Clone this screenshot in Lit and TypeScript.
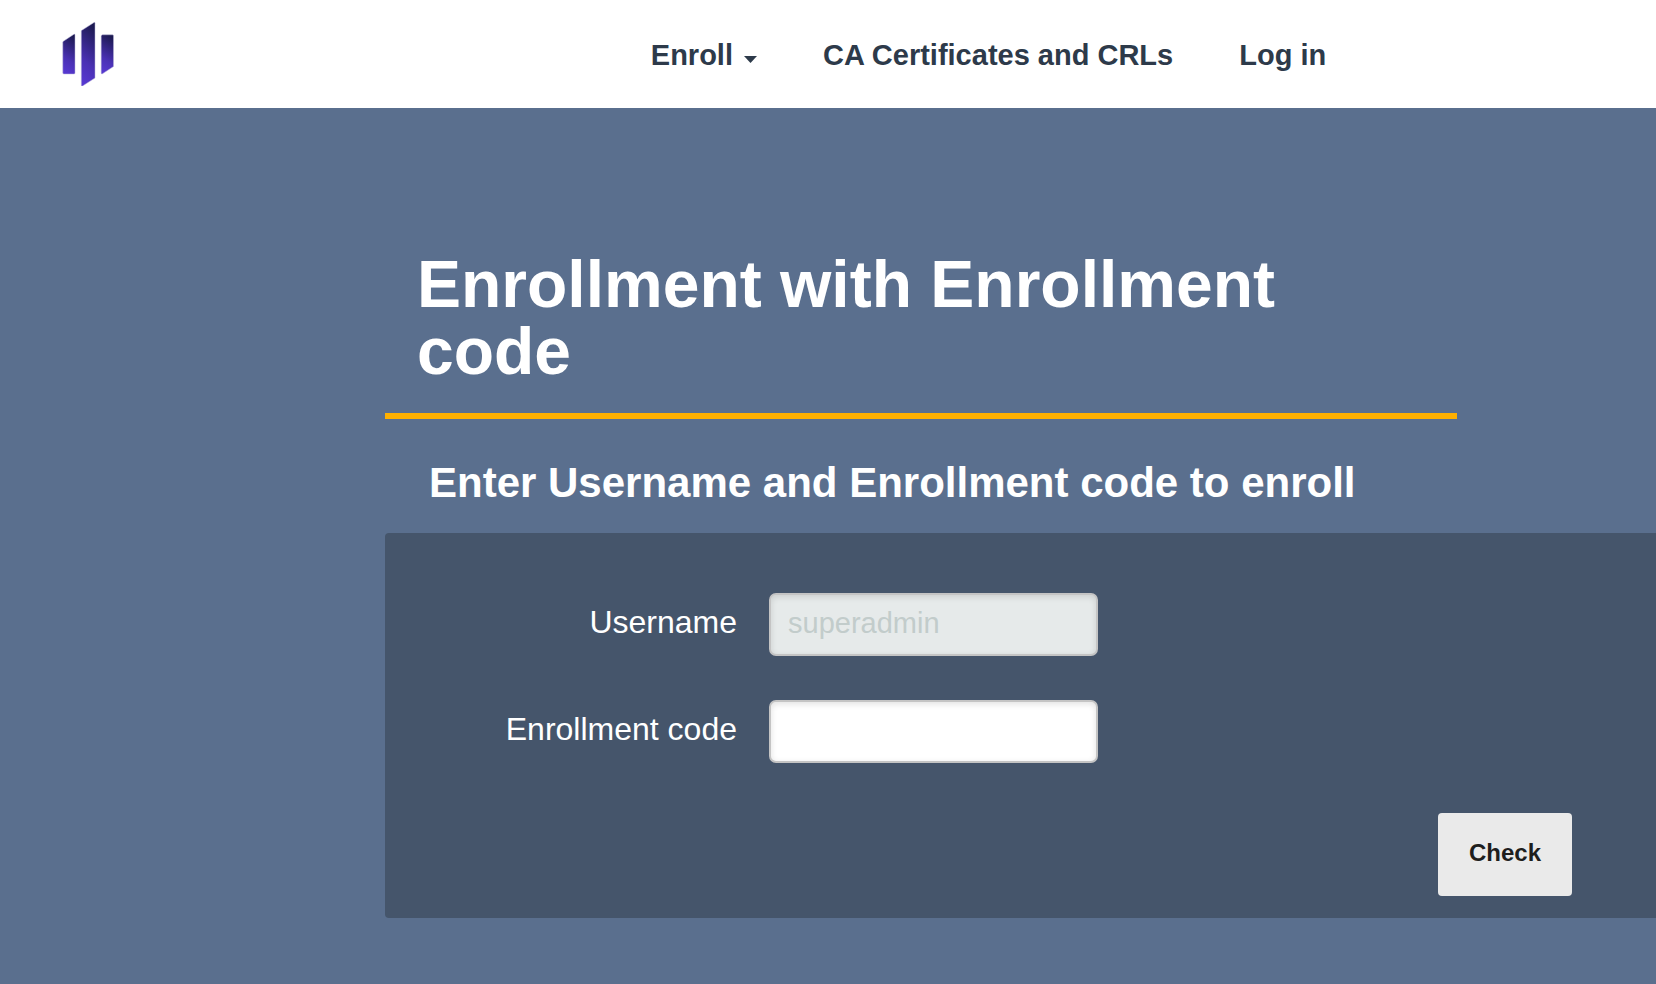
import { LitElement, html, css } from "lit";
import { customElement } from "lit/decorators.js";

@customElement("app-root")
export class AppRoot extends LitElement {
  static styles = css`
    :host {
      display: flex;
      flex-direction: column;
      min-height: 100vh;
      background: #5a6f8e;
      color: #fff;
      font-family: "Liberation Sans", Arial, sans-serif;
    }
    * {
      box-sizing: border-box;
    }
    .topbar {
      display: flex;
      align-items: center;
      height: 108px;
      padding-left: 60px;
      background: #fff;
    }
    .brand {
      display: flex;
      padding-bottom: 2px;
    }
    .nav {
      display: flex;
      gap: 66px;
      margin: 0 auto;
      padding: 2px 0 0 205px;
      font-size: 29px;
      font-weight: 700;
      line-height: 34px;
    }
    .link {
      display: flex;
      align-items: center;
      gap: 11px;
      padding: 0;
      border: 0;
      background: none;
      color: #2d3a4a;
      font: inherit;
      text-decoration: none;
      white-space: nowrap;
    }
    .caret {
      margin-top: 8px;
    }
    .page {
      padding: 143px 0 66px 385px;
    }
    .title {
      margin: 0 199px 0 0;
      padding: 0 32px 28px;
      border-bottom: 6px solid #ffb000;
      font-size: 66px;
      font-weight: 700;
      line-height: 67px;
    }
    .subtitle {
      margin: 0;
      padding: 40px 44px 26px;
      font-size: 42px;
      font-weight: 700;
      line-height: 48px;
    }
    .panel {
      display: flex;
      flex-direction: column;
      padding: 60px 84px 22px 0;
      border-radius: 4px 0 0 4px;
      background: #45556b;
    }
    .fields {
      display: grid;
      gap: 44px;
      margin-bottom: 50px;
    }
    .field {
      display: grid;
      grid-template-columns: 352px 329px;
      column-gap: 32px;
      align-items: center;
    }
    .label {
      padding-bottom: 6px;
      font-size: 32px;
      line-height: 36px;
      text-align: right;
    }
    .input {
      width: 100%;
      height: 63px;
      padding: 0 17px 2px;
      border: 2px solid #c4c4c4;
      border-radius: 7px;
      background: #fff;
      box-shadow: inset 0 2px 6px rgba(0, 0, 0, 0.12);
      color: #2d3a4a;
      font: inherit;
      font-size: 29px;
    }
    .input:disabled {
      background: #e6eaea;
      color: #c2cccb;
    }
    .submit {
      align-self: flex-end;
      padding: 25px 31px 29px;
      border: 0;
      border-radius: 4px;
      background: #eaeaea;
      color: #1e1e1e;
      font: inherit;
      font-size: 24px;
      font-weight: 700;
      line-height: 29px;
    }
  `;

  render() {
    return html`
      <header class="topbar">
        <a class="brand" href="#" aria-label="Home">
          <svg width="56" height="66" viewBox="0 0 56 66">
            <defs>
              <linearGradient id="bar" x1="0.6" y1="0" x2="0.4" y2="1">
                <stop offset="0" stop-color="#1c1a50" />
                <stop offset="0.65" stop-color="#4a31b4" />
                <stop offset="1" stop-color="#5638d0" />
              </linearGradient>
            </defs>
            <g fill="url(#bar)" stroke="#b9b4d8" stroke-width="0.5" stroke-linejoin="round">
              <path d="M3 21.5 14 14.2Q15 13.7 15 15V53Q15 54 14 54H4Q2.800 54 2.800 53V22.500Z" />
              <path d="M21.500 10.500 34 2.500Q35 2 35 3.200V58L22.500 66Q21.300 66.500 21.300 65.200V11Z" />
              <path d="M41.200 16.500Q41.200 14.800 42.500 14.800H52.500Q53.500 14.800 53.500 16V46.500L42.500 53.700Q41.200 54.300 41.200 53Z" />
            </g>
          </svg>
        </a>
        <nav class="nav">
          <button class="link" type="button" aria-haspopup="true">
            Enroll
            <svg class="caret" width="13" height="7" viewBox="0 0 13 7">
              <path d="M0 0H13L6.500 7Z" fill="#2d3a4a" />
            </svg>
          </button>
          <a class="link" href="#ca">CA Certificates and CRLs</a>
          <a class="link" href="#login">Log in</a>
        </nav>
      </header>
      <main class="page">
        <h1 class="title">Enrollment with Enrollment code</h1>
        <h2 class="subtitle">Enter Username and Enrollment code to enroll</h2>
        <form class="panel">
          <div class="fields">
            <div class="field">
              <label class="label" for="username">Username</label>
              <input class="input" id="username" type="text" value="superadmin" disabled />
            </div>
            <div class="field">
              <label class="label" for="code">Enrollment code</label>
              <input class="input" id="code" type="password" />
            </div>
          </div>
          <button class="submit" type="button">Check</button>
        </form>
      </main>
    `;
  }
}
